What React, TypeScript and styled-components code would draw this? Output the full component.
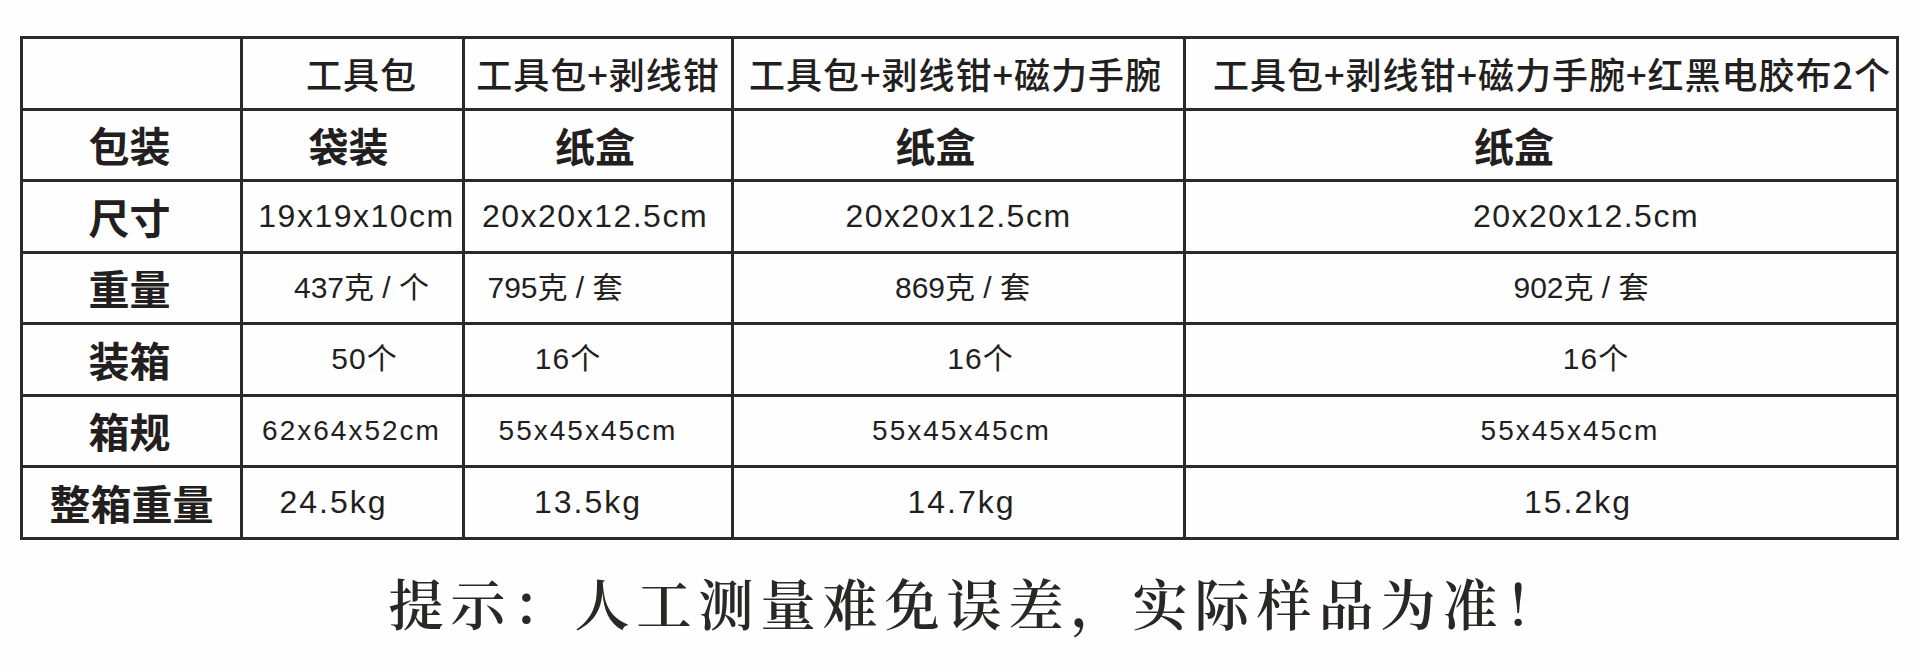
import React from 'react';
import styled, { createGlobalStyle } from 'styled-components';

type Kind = 'head' | 'label' | 'pack' | 'size' | 'weight' | 'count' | 'carton' | 'gross';

const cjk = '"Noto Sans CJK SC", sans-serif';
const latin = '"Liberation Sans", "Noto Sans CJK SC", sans-serif';

const fonts: Record<Kind, { size: number; spacing: number; weight: number; family: string }> = {
  head: { size: 36, spacing: 1, weight: 500, family: cjk },
  label: { size: 41, spacing: 0, weight: 700, family: cjk },
  pack: { size: 40, spacing: 0, weight: 700, family: cjk },
  size: { size: 32, spacing: 1.5, weight: 400, family: latin },
  weight: { size: 30, spacing: 0, weight: 400, family: latin },
  count: { size: 30, spacing: 1, weight: 400, family: latin },
  carton: { size: 28, spacing: 2, weight: 400, family: latin },
  gross: { size: 32, spacing: 2, weight: 400, family: latin },
};

const GlobalStyle = createGlobalStyle`
  html, body {
    margin: 0;
    padding: 0;
    background: #fefefe;
  }
  body {
    font-family: "Liberation Sans", "Noto Sans CJK SC", sans-serif;
    color: #231f20;
  }
`;

const Page = styled.main`
  width: 1920px;
  height: 672px;
  box-sizing: border-box;
  padding: 36px 21px 0 20px;
  background: #fefefe;
  overflow: hidden;
`;

const SpecGrid = styled.div`
  display: grid;
  grid-template-columns: 217px 219px 266px 449px 710px;
  grid-auto-rows: 68.5px;
  gap: 3px;
  padding: 3px;
  width: 1879px;
  box-sizing: border-box;
  background: #2b2929;
`;

const Cell = styled.div<{ $kind: Kind; $nudge: number }>`
  background: #fefefe;
  display: flex;
  align-items: center;
  justify-content: center;
  white-space: nowrap;
  box-sizing: border-box;
  padding-left: ${({ $nudge }) => Math.max(0, $nudge * 2)}px;
  padding-right: ${({ $nudge }) => Math.max(0, -$nudge * 2)}px;
  font-family: ${({ $kind }) => fonts[$kind].family};
  font-size: ${({ $kind }) => fonts[$kind].size}px;
  font-weight: ${({ $kind }) => fonts[$kind].weight};
  letter-spacing: ${({ $kind }) => fonts[$kind].spacing}px;
  color: #231f20;
  line-height: 1;
`;

const Notice = styled.p`
  margin: 30px 0 0;
  padding-left: 36px;
  text-align: center;
  font-family: "Noto Serif CJK SC", "Liberation Serif", "Noto Sans CJK SC", serif;
  font-size: 55px;
  line-height: 64px;
  letter-spacing: 7px;
  font-weight: 600;
  color: #2a2727;
`;

type Row = { label: string; kind: Kind; labelNudge: number; cells: [string, number][] };

const rows: Row[] = [
  {
    label: '',
    kind: 'head',
    labelNudge: 0,
    cells: [
      ['工具包', 9],
      ['工具包+剥线钳', 0],
      ['工具包+剥线钳+磁力手腕', -3],
      ['工具包+剥线钳+磁力手腕+红黑电胶布2个', 11],
    ],
  },
  {
    label: '包装',
    kind: 'pack',
    labelNudge: -2,
    cells: [
      ['袋装', -4],
      ['纸盒', -3],
      ['纸盒', -23],
      ['纸盒', -27],
    ],
  },
  {
    label: '尺寸',
    kind: 'size',
    labelNudge: -2,
    cells: [
      ['19x19x10cm', 4],
      ['20x20x12.5cm', -3],
      ['20x20x12.5cm', 0],
      ['20x20x12.5cm', 45],
    ],
  },
  {
    label: '重量',
    kind: 'weight',
    labelNudge: -2,
    cells: [
      ['437克 / 个', 9],
      ['795克 / 套', -43],
      ['869克 / 套', 4],
      ['902克 / 套', 40],
    ],
  },
  {
    label: '装箱',
    kind: 'count',
    labelNudge: -2,
    cells: [
      ['50个', 12],
      ['16个', -30],
      ['16个', 22],
      ['16个', 55],
    ],
  },
  {
    label: '箱规',
    kind: 'carton',
    labelNudge: -2,
    cells: [
      ['62x64x52cm', -1],
      ['55x45x45cm', -10],
      ['55x45x45cm', 3],
      ['55x45x45cm', 29],
    ],
  },
  {
    label: '整箱重量',
    kind: 'gross',
    labelNudge: 0,
    cells: [
      ['24.5kg', -19],
      ['13.5kg', -10],
      ['14.7kg', 3],
      ['15.2kg', 37],
    ],
  },
];

const App: React.FC = () => {
  return (
    <>
      <GlobalStyle />
      <Page>
        <SpecGrid>
          {rows.map((row, r) => (
            <React.Fragment key={r}>
              <Cell $kind="label" $nudge={row.labelNudge}>{row.label}</Cell>
              {row.cells.map(([text, nudge], c) => (
                <Cell key={c} $kind={row.kind} $nudge={nudge}>
                  {text}
                </Cell>
              ))}
            </React.Fragment>
          ))}
        </SpecGrid>
        <Notice>提示：人工测量难免误差，实际样品为准！</Notice>
      </Page>
    </>
  );
};

export default App;
